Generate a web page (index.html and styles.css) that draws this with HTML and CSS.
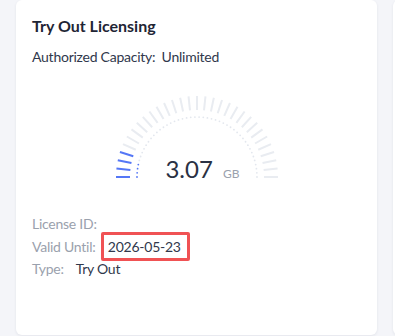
FILE: index.html
```html
<!DOCTYPE html>
<html lang="en">
<head>
    <meta charset="UTF-8">
    <meta name="viewport" content="width=device-width, initial-scale=1.0">
    <title>Try Out Licensing</title>
    <link rel="stylesheet" href="styles.css">
</head>
<body>

    <div class="cards">
        <!-- License card -->
        <div class="card">
            <h2 class="card-title">Try Out Licensing</h2>
            <p class="capacity">
                <span>Authorized Capacity:</span>
                <span class="capacity-value">Unlimited</span>
            </p>

            <!-- Usage gauge -->
            <div class="gauge">
                <svg id="gauge-svg" width="170" height="90" viewBox="0 0 170 90"></svg>
                <div class="gauge-value">
                    <span class="gauge-number">3.07</span>
                    <span class="gauge-unit">GB</span>
                </div>
            </div>

            <div class="info">
                <div class="info-row">
                    <span class="info-label">License ID:</span>
                </div>
                <div class="info-row">
                    <span class="info-label">Valid Until:</span>
                    <span class="info-value highlight">2026-05-23</span>
                </div>
                <div class="info-row">
                    <span class="info-label">Type:</span>
                    <span class="info-value">Try Out</span>
                </div>
            </div>
        </div>

        <div class="card card-next"></div>
    </div>

    <script>
        // Draw gauge ticks
        const svg = document.getElementById('gauge-svg');
        const ns = 'http://www.w3.org/2000/svg';
        const cx = 85;
        const cy = 84;
        const tickCount = 31;
        const activeTicks = 4;

        for (let i = 0; i < tickCount; i++) {
            const angle = Math.PI - (Math.PI * i) / (tickCount - 1);
            const cos = Math.cos(angle);
            const sin = Math.sin(angle);
            const line = document.createElementNS(ns, 'line');
            line.setAttribute('x1', cx + cos * 67);
            line.setAttribute('y1', cy - sin * 67);
            line.setAttribute('x2', cx + cos * 81);
            line.setAttribute('y2', cy - sin * 81);
            line.setAttribute('class', i < activeTicks ? 'tick active' : 'tick');
            svg.appendChild(line);
        }

        // Inner dotted arc
        const dotCount = 46;
        for (let i = 0; i < dotCount; i++) {
            const angle = Math.PI - (Math.PI * i) / (dotCount - 1);
            const dot = document.createElementNS(ns, 'circle');
            dot.setAttribute('cx', cx + Math.cos(angle) * 60);
            dot.setAttribute('cy', cy - Math.sin(angle) * 60);
            dot.setAttribute('r', 0.9);
            dot.setAttribute('class', i < 4 ? 'dot active' : 'dot');
            svg.appendChild(dot);
        }
    </script>
</body>
</html>
```

FILE: styles.css
```css
body {
    margin: 0;
    overflow: hidden;
    background: #f4f5f9;
    font-family: Lato, "Liberation Sans", sans-serif;
    color: #30384c;
}

.cards {
    display: flex;
    gap: 16px;
    width: 395px;
    height: 336px;
    box-sizing: border-box;
    padding-left: 16px;
    overflow: hidden;
}

.card {
    flex: 0 0 361px;
    height: 335px;
    box-sizing: border-box;
    background: #fff;
    border-radius: 6px;
    box-shadow: 0 1px 3px rgba(30, 40, 70, 0.08);
    padding: 15px 16px;
}

.card-title {
    margin: 0;
    font-size: 16px;
    font-weight: 700;
    line-height: 22px;
    color: #1f2535;
}

.capacity {
    margin: 10px 0 0;
    font-size: 14px;
    line-height: 20px;
    letter-spacing: -0.25px;
}

.capacity-value {
    margin-left: 3px;
}

.gauge {
    position: relative;
    width: 170px;
    height: 90px;
    margin: 26px auto 0;
}

.gauge svg {
    display: block;
}

.tick {
    stroke: #e9ecf1;
    stroke-width: 2;
}

.tick.active {
    stroke: #5577f6;
}

.dot {
    fill: #e3e7ee;
}

.dot.active {
    fill: #5577f6;
}

.gauge-value {
    position: absolute;
    left: 0;
    right: 0;
    bottom: 0;
    text-align: center;
    padding-left: 12px;
}

.gauge-number {
    font-size: 24px;
    color: #2a3144;
}

.gauge-unit {
    font-size: 12px;
    color: #9aa1ad;
    margin-left: 6px;
}

.info {
    margin-top: 30px;
    font-size: 14px;
    letter-spacing: -0.25px;
}

.info-row {
    height: 22.5px;
    line-height: 22px;
}

.info-label {
    color: #9aa1ad;
    margin-right: 9px;
}

.info-value {
    color: #30384c;
}

.highlight {
    position: relative;
}

.highlight::after {
    content: "";
    position: absolute;
    top: -6px;
    bottom: -6px;
    left: -7px;
    right: -9px;
    border: 3px solid #f05254;
    border-radius: 2px;
}

.card-next {
    flex-basis: 361px;
}
```
